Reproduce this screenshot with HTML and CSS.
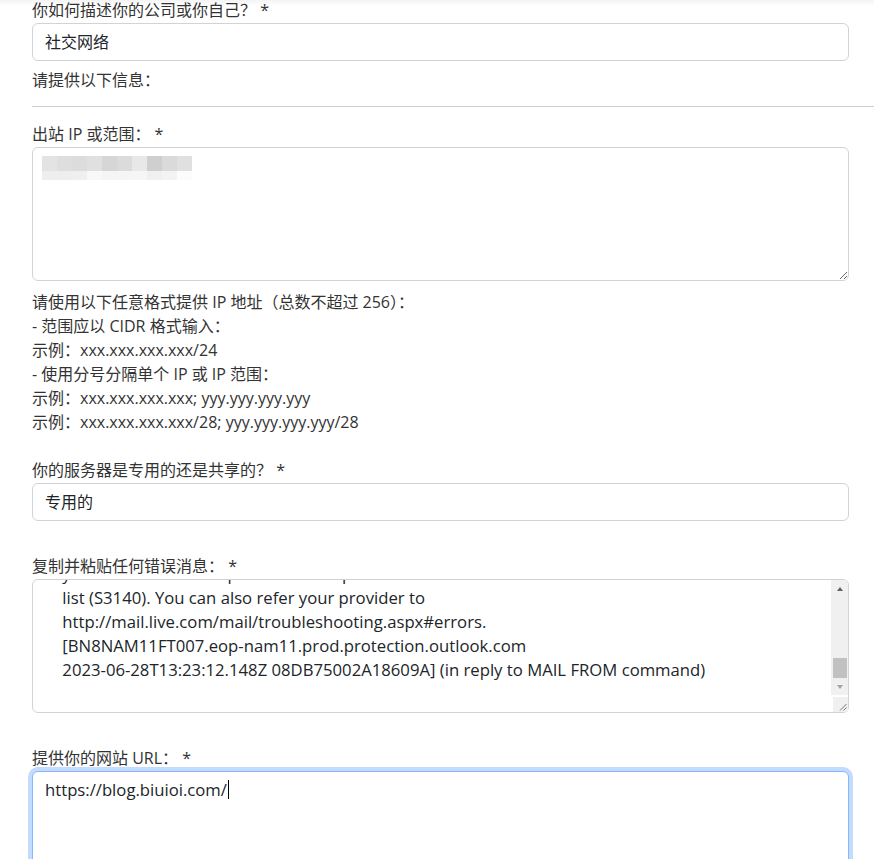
FILE: index.html
```html
<!DOCTYPE html>
<html lang="zh-CN">
<head>
    <meta charset="UTF-8">
    <meta name="viewport" content="width=device-width, initial-scale=1.0">
    <title>交付问题提交</title>
    <link rel="stylesheet" href="styles.css">
</head>
<body>
  <form class="form-page">
    <div class="field">
        <label class="form-label">你如何描述你的公司或你自己？ *</label>
        <input class="form-control" type="text" value="社交网络">
    </div>
    <p class="section-note">请提供以下信息：</p>
    <hr class="divider">

    <div class="field">
        <label class="form-label">出站 IP 或范围： *</label>
        <div class="box-wrap">
            <textarea class="form-control"></textarea>
            <!-- 打码的 IP -->
            <svg class="mosaic" width="150" height="24" viewBox="0 0 150 24">
                <rect x="0" y="0" width="15" height="15" fill="#e3e3e3"/>
                <rect x="15" y="0" width="15" height="15" fill="#dedede"/>
                <rect x="30" y="0" width="15" height="15" fill="#dcdcdc"/>
                <rect x="45" y="0" width="15" height="15" fill="#e0e0e0"/>
                <rect x="60" y="0" width="15" height="15" fill="#d6d6d6"/>
                <rect x="75" y="0" width="15" height="15" fill="#dbdbdb"/>
                <rect x="90" y="0" width="15" height="15" fill="#e8e8e8"/>
                <rect x="105" y="0" width="15" height="15" fill="#cfcfcf"/>
                <rect x="120" y="0" width="15" height="15" fill="#dadada"/>
                <rect x="135" y="0" width="15" height="15" fill="#e0e0e0"/>
                <rect x="0" y="15" width="15" height="9" fill="#eeeeee"/>
                <rect x="15" y="15" width="15" height="9" fill="#eeeeee"/>
                <rect x="30" y="15" width="15" height="9" fill="#efefef"/>
                <rect x="45" y="15" width="15" height="9" fill="#f8f8f8"/>
                <rect x="60" y="15" width="15" height="9" fill="#f5f5f5"/>
                <rect x="75" y="15" width="15" height="9" fill="#f5f5f5"/>
                <rect x="90" y="15" width="15" height="9" fill="#f6f6f6"/>
                <rect x="105" y="15" width="15" height="9" fill="#f0f0f0"/>
                <rect x="120" y="15" width="15" height="9" fill="#f3f3f3"/>
                <rect x="135" y="15" width="15" height="9" fill="#fcfcfc"/>
            </svg>
        </div>
        <div class="form-help">
            请使用以下任意格式提供 IP 地址（总数不超过 256）：<br>
            - 范围应以 CIDR 格式输入：<br>
            示例：xxx.xxx.xxx.xxx/24<br>
            - 使用分号分隔单个 IP 或 IP 范围：<br>
            示例：xxx.xxx.xxx.xxx; yyy.yyy.yyy.yyy<br>
            示例：xxx.xxx.xxx.xxx/28; yyy.yyy.yyy.yyy/28
        </div>
    </div>

    <div class="field field-gap">
        <label class="form-label">你的服务器是专用的还是共享的？ *</label>
        <input class="form-control" type="text" value="专用的">
    </div>

    <div class="field field-gap-lg">
        <label class="form-label">复制并粘贴任何错误消息： *</label>
        <div class="box-wrap">
            <textarea class="form-control error-box scroll-end">
Delivery has failed to these recipients or groups:

    xxxxxx@outlook.com
    Your message couldn't be delivered. Despite repeated attempts to deliver
    your message, the recipient's email system refused to accept a connection
    from your email system.

    Contact the recipient by some other means (by phone, for example) and ask
    them to tell their email admin that it appears that their email system is
    refusing connections from your email server. Give them the error details
    shown below. It's likely that the recipient's email admin is the only one
    who can fix this problem.

Diagnostic information for administrators:

Remote Server returned '550 5.7.1 Unfortunately, messages from
    [xx.xx.xx.xx] weren't sent. Please contact
    your Internet service provider since part of their network is on our block
    list (S3140). You can also refer your provider to
    http://mail.live.com/mail/troubleshooting.aspx#errors.
    [BN8NAM11FT007.eop-nam11.prod.protection.outlook.com
    2023-06-28T13:23:12.148Z 08DB75002A18609A] (in reply to MAIL FROM command)
</textarea>
            <div class="scrollbar">
                <span class="sb-arrow sb-up"></span>
                <span class="sb-track"><span class="sb-thumb"></span></span>
                <span class="sb-arrow sb-down"></span>
            </div>
        </div>
    </div>

    <div class="field field-gap-lg">
        <label class="form-label">提供你的网站 URL： *</label>
        <div class="box-wrap">
            <textarea class="form-control is-focused">https://blog.biuioi.com/</textarea>
            <span class="caret"></span>
        </div>
    </div>
  </form>
  <script src="script.js"></script>
</body>
</html>
```

FILE: styles.css
```css
* {
    margin: 0;
    padding: 0;
    box-sizing: border-box;
}

html,
body {
    overflow: hidden;
}

body {
    font-family: "Open Sans", "Noto Sans CJK SC", sans-serif;
    font-size: 16px;
    line-height: 24px;
    color: #333;
    background: #fff linear-gradient(to bottom, #f4f4f4 0, #fff 6px) no-repeat;
}

/* Form layout */
.form-page {
    padding-left: 32px;
    margin-top: -2px;
}

.field {
    margin-right: 25px;
}

.field-gap {
    margin-top: 24px;
}

.field-gap-lg {
    margin-top: 33px;
}

.form-label {
    display: block;
    margin-bottom: 1px;
}

.section-note {
    margin-top: 7px;
}

.divider {
    border: none;
    border-top: 1px solid #cfcfcf;
    margin: 14px 0 15px;
}

.form-help {
    margin-top: 9px;
}

/* Inputs */
.form-control {
    display: block;
    width: 100%;
    padding: 6px 12px;
    font-family: "Open Sans", "Noto Sans CJK SC", sans-serif;
    font-size: 16px;
    line-height: 24px;
    color: #212529;
    background: #fff;
    border: 1px solid #ced4da;
    border-radius: 6px;
    outline: none;
    caret-color: transparent;
}

textarea.form-control {
    height: 134px;
    font-size: 16.7px;
    resize: vertical;
    overflow: hidden;
}

.form-control.is-focused {
    border-color: #86b7fe;
    box-shadow: 0 0 0 4px rgba(13, 110, 253, 0.25);
}

.box-wrap {
    position: relative;
}

.mosaic {
    position: absolute;
    left: 10px;
    top: 9px;
}

.caret {
    position: absolute;
    left: 196px;
    top: 9px;
    width: 1px;
    height: 19px;
    background: #000;
}

/* Scrollbar of the error message box */
.error-box::-webkit-resizer {
    background: #f0f0f0 url("data:image/svg+xml,%3Csvg xmlns='http://www.w3.org/2000/svg' width='8' height='8'%3E%3Cpath d='M7.5 1L1 7.5M7.5 4.5L4.5 7.5' stroke='%23777' stroke-width='1'/%3E%3C/svg%3E") no-repeat right 1px bottom 1px;
}

.scrollbar {
    position: absolute;
    top: 1px;
    right: 1px;
    width: 17px;
    height: 115px;
    display: flex;
    flex-direction: column;
    background: #f0f0f0;
    border-top-right-radius: 5px;
}

.sb-arrow {
    height: 17px;
    display: flex;
    align-items: center;
    justify-content: center;
}

.sb-arrow::before {
    content: "";
    border-left: 3.5px solid transparent;
    border-right: 3.5px solid transparent;
}

.sb-up::before {
    border-bottom: 4px solid #606060;
}

.sb-down::before {
    border-top: 4px solid #a3a3a3;
}

.sb-track {
    flex: 1;
    display: flex;
    flex-direction: column;
    justify-content: flex-end;
    padding: 0 1px 0 2px;
}

.sb-thumb {
    height: 20px;
    background: #c1c1c1;
}
```

FILE: script.js
```js
document.querySelectorAll('.scroll-end').forEach(function (box) {
    box.scrollTop = box.scrollHeight;
});
```
